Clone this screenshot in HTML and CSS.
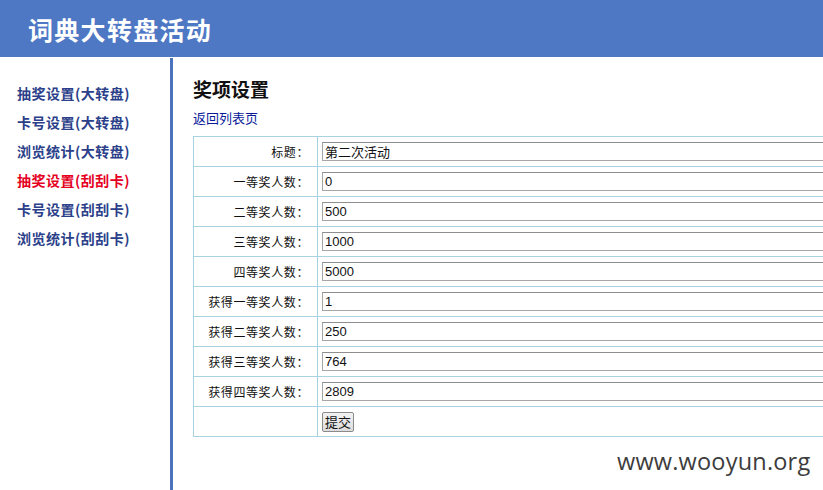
FILE: index.html
```html
<!DOCTYPE html>
<html lang="zh">
<head>
<meta charset="utf-8">
<title>词典大转盘活动</title>
<link rel="stylesheet" href="styles.css">
</head>
<body>
<header class="topbar"><h1 class="site-title">词典大转盘活动</h1></header>
<div class="layout">
  <nav class="sidebar">
    <a class="nav-item" href="#">抽奖设置(大转盘)</a>
    <a class="nav-item" href="#">卡号设置(大转盘)</a>
    <a class="nav-item" href="#">浏览统计(大转盘)</a>
    <a class="nav-item active" href="#">抽奖设置(刮刮卡)</a>
    <a class="nav-item" href="#">卡号设置(刮刮卡)</a>
    <a class="nav-item" href="#">浏览统计(刮刮卡)</a>
  </nav>
  <main class="content">
    <h2 class="page-title">奖项设置</h2>
    <a class="back-link" href="#">返回列表页</a>
    <table class="form-table">
      <tr><td class="label">标题：</td><td class="field"><input class="text-input" value="第二次活动"></td></tr>
      <tr><td class="label">一等奖人数：</td><td class="field"><input class="text-input" value="0"></td></tr>
      <tr><td class="label">二等奖人数：</td><td class="field"><input class="text-input" value="500"></td></tr>
      <tr><td class="label">三等奖人数：</td><td class="field"><input class="text-input" value="1000"></td></tr>
      <tr><td class="label">四等奖人数：</td><td class="field"><input class="text-input" value="5000"></td></tr>
      <tr><td class="label">获得一等奖人数：</td><td class="field"><input class="text-input" value="1"></td></tr>
      <tr><td class="label">获得二等奖人数：</td><td class="field"><input class="text-input" value="250"></td></tr>
      <tr><td class="label">获得三等奖人数：</td><td class="field"><input class="text-input" value="764"></td></tr>
      <tr><td class="label">获得四等奖人数：</td><td class="field"><input class="text-input" value="2809"></td></tr>
      <tr><td class="label"></td><td class="field"><button class="submit-btn" type="button">提交</button></td></tr>
    </table>
  </main>
</div>
<div class="watermark">www.wooyun.org</div>
</body>
</html>
```

FILE: styles.css
```css
html, body {
  margin: 0;
  padding: 0;
  height: 100%;
  overflow: hidden;
  background: #ffffff;
  font-family: "Noto Sans CJK SC", "Liberation Sans", sans-serif;
}

.topbar {
  height: 57px;
  background: #4e77c4;
  display: flex;
  align-items: center;
  padding-left: 28px;
  margin-bottom: 1px;
}

.site-title {
  margin: 0;
  color: #ffffff;
  font-size: 25px;
  font-weight: 700;
  letter-spacing: 1.3px;
}

.layout {
  display: flex;
  height: calc(100% - 58px);
}

.sidebar {
  flex: none;
  width: 173px;
  box-sizing: border-box;
  border-right: 3px solid #4a72bd;
  padding-top: 21px;
  display: flex;
  flex-direction: column;
}

.nav-item {
  display: block;
  padding-left: 17px;
  height: 29px;
  line-height: 29px;
  font-size: 14px;
  font-weight: 700;
  letter-spacing: 0.5px;
  color: #2b3f8a;
  text-decoration: none;
  white-space: nowrap;
}

.nav-item.active {
  color: #e5001e;
}

.content {
  padding-left: 20px;
  padding-top: 18px;
  flex: 1;
  min-width: 0;
}

.page-title {
  margin: 0;
  font-size: 19px;
  font-weight: 700;
  line-height: 26px;
  color: #111111;
}

.back-link {
  display: block;
  margin-top: 7px;
  font-size: 13px;
  line-height: 18px;
  color: #0a1a9a;
  text-decoration: none;
}

.form-table {
  margin-top: 9px;
  border-collapse: collapse;
  width: 760px;
}

.form-table td {
  border: 1px solid #a8d2e2;
  height: 29px;
  padding: 0;
}

.label {
  width: 115px;
  text-align: right;
  padding-right: 8px !important;
  font-size: 12px;
  letter-spacing: 0.6px;
  color: #111111;
  white-space: nowrap;
}

.field {
  padding-left: 4px !important;
}

.text-input {
  display: block;
  width: 560px;
  height: 19px;
  box-sizing: border-box;
  border: 1px solid #a6a6a6;
  border-top-color: #8e8e8e;
  padding: 0 2px;
  font-family: "Liberation Sans", "Noto Sans CJK SC", sans-serif;
  font-size: 13px;
  color: #111111;
  background: #ffffff;
}

.submit-btn {
  display: block;
  height: 20px;
  padding: 0 2px;
  border: 1px solid #8a8a8a;
  border-radius: 2px;
  background: linear-gradient(#f2f2f2, #dcdcdc);
  font-family: "Noto Sans CJK SC", sans-serif;
  font-size: 13px;
  line-height: 16px;
  color: #111111;
}

.watermark {
  position: absolute;
  left: 617px;
  top: 445px;
  font-family: "Open Sans", "DejaVu Sans", sans-serif;
  font-size: 23.5px;
  color: #3d3d3d;
  letter-spacing: 0.2px;
}
```
